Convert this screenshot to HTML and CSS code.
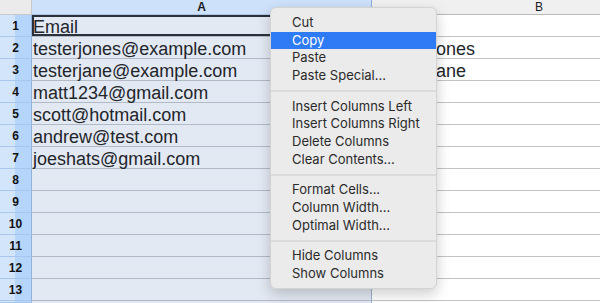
FILE: index.html
```html
<!DOCTYPE html>
<html lang="en">
<head>
    <meta charset="UTF-8">
    <title>Spreadsheet</title>
    <link rel="stylesheet" href="styles.css">
</head>
<body>
    <div id="sheet">
        <div class="corner"></div>
        <div class="colHead selected">A</div>
        <div class="colHead colHeadB">B</div>

        <div class="rowHead">1</div>
        <div class="cell colA cursor">Email</div>
        <div class="cell colB"></div>

        <div class="rowHead">2</div>
        <div class="cell colA">testerjones@example.com</div>
        <div class="cell colB">Tester Jones</div>

        <div class="rowHead">3</div>
        <div class="cell colA">testerjane@example.com</div>
        <div class="cell colB">Tester Jane</div>

        <div class="rowHead">4</div>
        <div class="cell colA">matt1234@gmail.com</div>
        <div class="cell colB"></div>

        <div class="rowHead">5</div>
        <div class="cell colA">scott@hotmail.com</div>
        <div class="cell colB"></div>

        <div class="rowHead">6</div>
        <div class="cell colA">andrew@test.com</div>
        <div class="cell colB"></div>

        <div class="rowHead">7</div>
        <div class="cell colA">joeshats@gmail.com</div>
        <div class="cell colB"></div>

        <div class="rowHead">8</div>
        <div class="cell colA"></div>
        <div class="cell colB"></div>

        <div class="rowHead">9</div>
        <div class="cell colA"></div>
        <div class="cell colB"></div>

        <div class="rowHead">10</div>
        <div class="cell colA"></div>
        <div class="cell colB"></div>

        <div class="rowHead">11</div>
        <div class="cell colA"></div>
        <div class="cell colB"></div>

        <div class="rowHead">12</div>
        <div class="cell colA"></div>
        <div class="cell colB"></div>

        <div class="rowHead">13</div>
        <div class="cell colA"></div>
        <div class="cell colB"></div>

        <!-- row 14 only peeks in at the bottom edge -->
        <div class="rowHead"></div>
        <div class="cell colA"></div>
        <div class="cell colB"></div>
    </div>

    <div id="contextMenu">
        <div class="menuItem">Cut</div>
        <div class="menuItem active">Copy</div>
        <div class="menuItem">Paste</div>
        <div class="menuItem">Paste Special...</div>
        <div class="separator"></div>
        <div class="menuItem">Insert Columns Left</div>
        <div class="menuItem">Insert Columns Right</div>
        <div class="menuItem">Delete Columns</div>
        <div class="menuItem">Clear Contents...</div>
        <div class="separator"></div>
        <div class="menuItem">Format Cells...</div>
        <div class="menuItem">Column Width...</div>
        <div class="menuItem">Optimal Width...</div>
        <div class="separator"></div>
        <div class="menuItem">Hide Columns</div>
        <div class="menuItem">Show Columns</div>
    </div>
</body>
</html>
```

FILE: styles.css
```css
html, body {
    margin: 0;
    padding: 0;
    overflow: hidden;
    background: #ffffff;
}
body {
    width: 600px;
    height: 303px;
    position: relative;
    font-family: "Liberation Sans", Arial, sans-serif;
}

#sheet {
    display: grid;
    grid-template-columns: 32px 340px 228px;
    grid-template-rows: 15px repeat(13, 22px) 2px;
    overflow: hidden;
    height: 303px;
}

.corner {
    background: #ebebeb;
    border-right: 1px solid #c8c8c8;
    border-bottom: 1px solid #c8c8c8;
    box-sizing: border-box;
}
.colHead {
    box-sizing: border-box;
    background: #f0f0f0;
    border-bottom: 1px solid #b9b9b9;
    font-size: 12px;
    line-height: 14px;
    text-align: center;
    color: #1a1a1a;
}
.colHeadB {
    padding-left: 106px;
}
.colHead.selected {
    background: #cde1fa;
    border-bottom: 1px solid #a9c6ea;
    border-right: 1px solid #8fb0d8;
    font-weight: bold;
}

.rowHead {
    box-sizing: border-box;
    background: linear-gradient(to right, #d3e5fb 0, #d3e5fb 15px, #b6d5fa 15px);
    border-bottom: 1px solid #a9c7ec;
    border-right: 1px solid #93b2d6;
    font-size: 12px;
    font-weight: bold;
    line-height: 21px;
    padding-top: 1px;
    text-align: center;
    color: #111;
}

.cell {
    box-sizing: border-box;
    font-size: 18px;
    line-height: 21px;
    padding-top: 2px;
    padding-left: 1px;
    color: #22252a;
    white-space: nowrap;
}
.colA {
    background: #e3e9f3;
    border-bottom: 1px solid #b2bac8;
    border-right: 1px solid #9fb0c8;
}
.colB {
    background: #ffffff;
    border-bottom: 1px solid #c4c4c4;
}
.cursor {
    box-shadow: inset 0 0 0 2px #2b313b;
}

#contextMenu {
    position: absolute;
    left: 270px;
    top: 7px;
    width: 167px;
    box-sizing: border-box;
    padding: 6px 0 5px 0;
    background: #ebebeb;
    border: 1px solid #d3d3d3;
    border-radius: 6px;
    box-shadow: 0 5px 14px rgba(0, 0, 0, 0.2);
    font-family: Inter, "Liberation Sans", sans-serif;
    font-size: 13px;
    color: #2a2a2a;
}
.menuItem {
    height: 17.67px;
    line-height: 17.67px;
    padding-left: 21px;
    white-space: nowrap;
}
.menuItem.active {
    background: #2f7bf6;
    color: #ffffff;
}
.separator {
    height: 2px;
    margin: 5.5px 0;
    background: #dbdbdb;
}
```
